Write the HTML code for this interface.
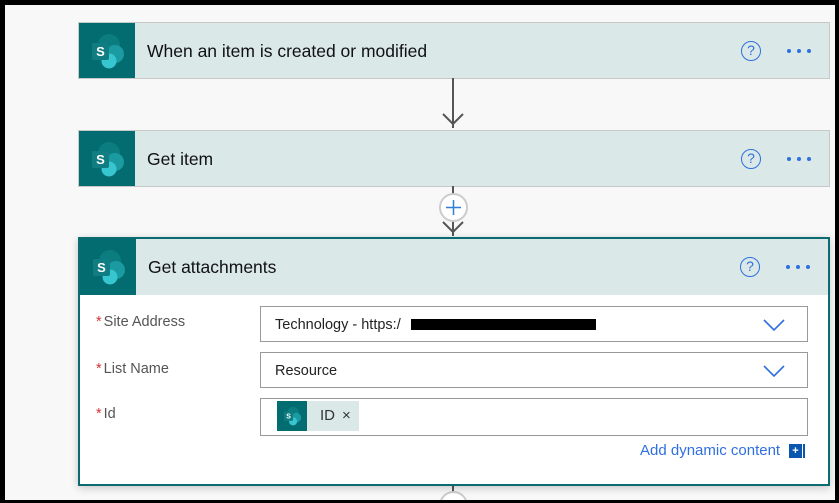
<!DOCTYPE html>
<html><head><meta charset="utf-8"><style>
*{margin:0;padding:0;box-sizing:border-box}
body{width:839px;height:503px;background:#000;position:relative;overflow:hidden;font-family:"Segoe UI","Liberation Sans",sans-serif}
#bg{position:absolute;left:5px;top:5px;width:830px;height:495px;background:#f8f8f8;overflow:hidden}
.card{position:absolute;left:73px;width:752px;height:57px;background:#dbe8e8;border:1px solid #c8c8c8}
.ic{position:absolute;left:0;top:0;width:56px;height:55px;background:#036c70}
.title{position:absolute;left:68px;top:18px;font-size:17.5px;color:#111}
.q{position:absolute;width:20px;height:20px;border:1.5px solid #2f6fe0;border-radius:50%;color:#2f6fe0;font-size:14px;text-align:center;line-height:17px}
.dots{position:absolute}
.lbl{position:absolute;left:91px;font-size:14.5px;color:#555}
.lbl b{color:#d13438;font-weight:normal;margin-right:2px}
.inp{position:absolute;left:255px;width:548px;height:36px;border:1px solid #999;background:#fff;font-size:14.5px;color:#222;padding:10px 0 0 14px}
.chev{position:absolute;right:22px;top:12px}
</style></head><body>
<div id="bg">
<svg width="0" height="0" style="position:absolute"><defs>
<g id="sp"><circle cx="30" cy="22" r="11" fill="#0b7c80"/><circle cx="36" cy="31" r="9" fill="#1a9ba1"/><circle cx="30" cy="38" r="7.5" fill="#37c6d0"/><rect x="13" y="20" width="17" height="17" rx="2" fill="#0f7d82"/><text x="21.5" y="33" font-size="13" font-weight="bold" fill="#fff" text-anchor="middle" font-family="Liberation Sans">S</text></g>
<g id="dt"><circle cx="3" cy="3" r="2" fill="#2f6fe0"/><circle cx="13" cy="3" r="2" fill="#2f6fe0"/><circle cx="23" cy="3" r="2" fill="#2f6fe0"/></g>
</defs></svg>

<div class="card" style="top:17px"><div class="ic"><svg width="56" height="55"><use href="#sp"/></svg></div><div class="title">When an item is created or modified</div><div class="q" style="left:662px;top:18px">?</div><svg class="dots" style="left:707px;top:25px" width="26" height="6"><use href="#dt"/></svg></div>
<div style="position:absolute;left:447px;top:73px;width:2px;height:50px;background:#555"></div>
<svg style="position:absolute;left:436px;top:104px" width="24" height="20"><path d="M2 5 L12 15 L22 5" stroke="#555" stroke-width="2" fill="none"/></svg>

<div class="card" style="top:125px"><div class="ic"><svg width="56" height="55"><use href="#sp"/></svg></div><div class="title">Get item</div><div class="q" style="left:662px;top:18px">?</div><svg class="dots" style="left:707px;top:25px" width="26" height="6"><use href="#dt"/></svg></div>
<div style="position:absolute;left:447px;top:181px;width:2px;height:50px;background:#555"></div>
<svg style="position:absolute;left:436px;top:212px" width="24" height="20"><path d="M2 5 L12 15 L22 5" stroke="#555" stroke-width="2" fill="none"/></svg>
<div style="position:absolute;left:434px;top:188px;width:29px;height:29px;border-radius:50%;background:#fff;border:2px solid #ccc"></div>
<svg style="position:absolute;left:440px;top:194px" width="17" height="17"><path d="M8.5 1V16M1 8.5H16" stroke="#2f7fd8" stroke-width="1.5"/></svg>

<div style="position:absolute;left:447px;top:478px;width:2px;height:20px;background:#555"></div>
<div style="position:absolute;left:434px;top:486px;width:29px;height:29px;border-radius:50%;background:#fff;border:2px solid #ccc"></div>

<div style="position:absolute;left:73px;top:232px;width:752px;height:249px;background:#fff;border:2px solid #0a6c70;box-shadow:0 2px 8px rgba(0,0,0,.2)">
 <div style="position:absolute;left:0;top:0;width:748px;height:56px;background:#dbe8e8">
  <div class="ic" style="height:56px"><svg width="56" height="56"><use href="#sp"/></svg></div>
  <div class="title">Get attachments</div><div class="q" style="left:660px;top:18px">?</div><svg class="dots" style="left:705px;top:25px" width="26" height="6"><use href="#dt"/></svg>
 </div>
</div>
<div class="lbl" style="top:309px"><b>*</b>Site Address</div>
<div class="lbl" style="top:356px"><b>*</b>List Name</div>
<div class="lbl" style="top:401px"><b>*</b>Id</div>
<div class="inp" style="top:301px">Technology - https:/<span style="position:absolute;left:150px;top:12px;width:185px;height:11px;background:#000"></span><svg class="chev" width="22" height="12"><path d="M1 1L11 11L21 1" stroke="#2f6fe0" stroke-width="1.6" fill="none"/></svg></div>
<div class="inp" style="top:347px">Resource<svg class="chev" width="22" height="12"><path d="M1 1L11 11L21 1" stroke="#2f6fe0" stroke-width="1.6" fill="none"/></svg></div>
<div class="inp" style="top:393px;height:38px;padding:0">
 <div style="position:absolute;left:16px;top:2px;width:82px;height:30px;background:#dbe8e8">
  <div style="position:absolute;left:0;top:0;width:30px;height:30px;background:#036c70"><svg width="30" height="30" viewBox="0 0 56 56"><use href="#sp"/></svg></div>
  <span style="position:absolute;left:43px;top:6px;font-size:15px;color:#333">ID</span>
  <span style="position:absolute;left:65px;top:6px;font-size:15px;color:#333">×</span>
 </div>
</div>
<div style="position:absolute;left:635px;top:437px;font-size:15px;color:#2f6fe0">Add dynamic content</div>
<div style="position:absolute;left:784px;top:439px;width:13px;height:14px;background:#0b57b0;color:#fff;font-size:11px;text-align:center;line-height:14px;font-weight:bold">+</div>
<div style="position:absolute;left:798px;top:439px;width:2px;height:14px;background:#0b57b0"></div>
</div>
</body></html>
